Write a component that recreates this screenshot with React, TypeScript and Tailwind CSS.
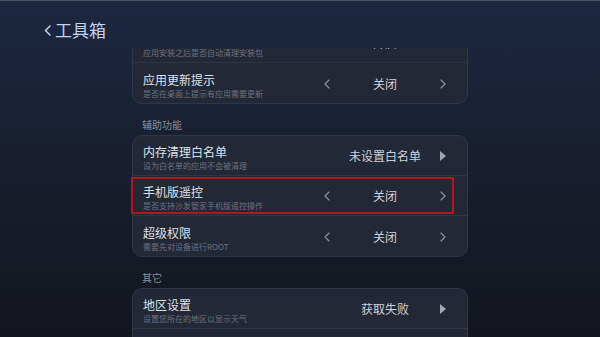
import React from 'react';

type Row = {
  title: string;
  desc: string;
  value: string;
  kind: 'toggle' | 'link';
  focused?: boolean;
};

const groups: { label?: string; rows: Row[] }[] = [
  {
    rows: [
      { title: '安装包自动清理', desc: '应用安装之后是否自动清理安装包', value: '开启', kind: 'toggle' },
      { title: '应用更新提示', desc: '是否在桌面上提示有应用需要更新', value: '关闭', kind: 'toggle' },
    ],
  },
  {
    label: '辅助功能',
    rows: [
      { title: '内存清理白名单', desc: '设为白名单的应用不会被清理', value: '未设置白名单', kind: 'link' },
      { title: '手机版遥控', desc: '是否支持沙发管家手机版遥控操作', value: '关闭', kind: 'toggle', focused: true },
      { title: '超级权限', desc: '需要先对设备进行ROOT', value: '关闭', kind: 'toggle' },
    ],
  },
  {
    label: '其它',
    rows: [
      { title: '地区设置', desc: '设置您所在的地区以显示天气', value: '获取失败', kind: 'link' },
      { title: '清除缓存', desc: '清除应用产生的缓存数据', value: '', kind: 'link' },
    ],
  },
];

function Chevron({ dir }: { dir: 'left' | 'right' }) {
  return (
    <svg width="6" height="10" viewBox="0 0 6 10" className="shrink-0">
      <polyline
        points={dir === 'left' ? '5,1 1,5 5,9' : '1,1 5,5 1,9'}
        fill="none"
        stroke="#8b909b"
        strokeWidth="1.2"
        strokeLinecap="round"
        strokeLinejoin="round"
      />
    </svg>
  );
}

function Triangle() {
  return (
    <svg width="6" height="10" viewBox="0 0 6 10" className="shrink-0">
      <polygon points="0,0 6,5 0,10" fill="#a3a7b0" />
    </svg>
  );
}

function SettingRow({ row, last }: { row: Row; last: boolean }) {
  return (
    <div className={`relative flex h-[40px] items-center pl-[10px] pr-[21px] ${last ? '' : 'border-b border-[#2f3546]'}`}>
      <div className="flex flex-1 flex-col pt-[4px]">
        <span className="text-[12px] leading-[16px] text-[#dfe2e9]">{row.title}</span>
        <span className="text-[8px] leading-[11px] text-[#6c7280]">{row.desc}</span>
      </div>
      <div className="flex w-[122px] items-center justify-between pt-[1px]">
        {row.kind === 'toggle' ? <Chevron dir="left" /> : <span className="w-[6px]" />}
        <span className="flex-1 text-center text-[12px] leading-[16px] text-[#cfd2d9]">{row.value}</span>
        {row.kind === 'toggle' ? <Chevron dir="right" /> : <Triangle />}
      </div>
      {row.focused && (
        <div className="pointer-events-none absolute left-[-2px] right-[13px] top-[1px] bottom-[1px] border-2 border-[#b8141b]" />
      )}
    </div>
  );
}

export default function App() {
  return (
    <div
      className="flex h-[337px] w-[600px] flex-col overflow-hidden border-t border-[#4a5162] bg-gradient-to-b from-[#1c2741] via-[#181e2e] to-[#13161e]"
      style={{ fontFamily: '"Noto Sans CJK SC", "Noto Sans", sans-serif' }}
    >
      {/* 顶部标题 */}
      <div className="flex h-[47px] shrink-0 items-start pl-[44px] pt-[19px]">
        <svg width="7" height="11" viewBox="0 0 7 11" className="mr-[4px] mt-[5px]">
          <polyline points="6,1 1.5,5.5 6,10" fill="none" stroke="#c5d2ee" strokeWidth="1.5" strokeLinecap="round" strokeLinejoin="round" />
        </svg>
        <span className="text-[17px] leading-[20px] text-[#c5d2ee]">工具箱</span>
      </div>

      {/* 设置列表 */}
      <div className="flex-1 overflow-hidden">
        <div className="mx-auto -mt-[26px] w-[336px]">
          {groups.map((g, gi) => (
            <div key={gi}>
              {g.label && (
                <div className="flex h-[31px] items-end pb-[3px] pl-[10px] text-[10px] leading-[14px] text-[#8a8f9a]">
                  {g.label}
                </div>
              )}
              <div className="rounded-[10px] border border-[#30364a] bg-[#222836]">
                {g.rows.map((r, ri) => (
                  <SettingRow key={r.title} row={r} last={ri === g.rows.length - 1} />
                ))}
              </div>
            </div>
          ))}
        </div>
      </div>
    </div>
  );
}
